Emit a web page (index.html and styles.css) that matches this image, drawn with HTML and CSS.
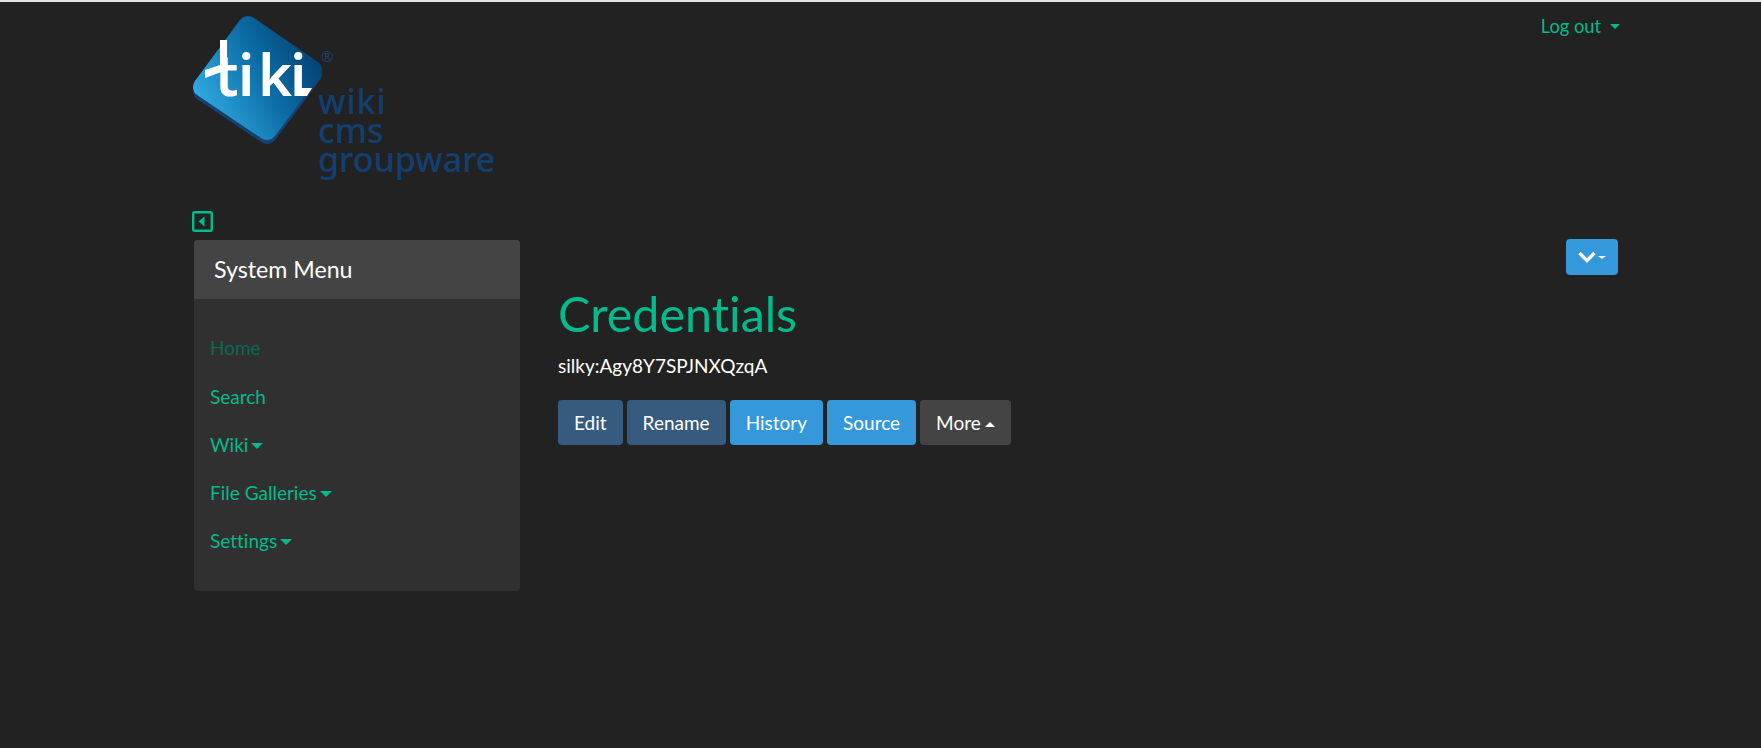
FILE: index.html
```html
<!DOCTYPE html>
<html lang="en">
<head>
    <meta charset="UTF-8">
    <meta name="viewport" content="width=device-width, initial-scale=1.0">
    <title>Credentials</title>
    <link rel="stylesheet" href="styles.css">
</head>
<body>
    <div class="page">
        <header class="top">
            <svg class="logo" width="320" height="170" viewBox="0 0 320 170" role="img" aria-label="Tiki wiki cms groupware">
                <defs>
                    <linearGradient id="tileFill" gradientUnits="userSpaceOnUse" x1="10" y1="95" x2="125" y2="35">
                        <stop offset="0" stop-color="#2fa8e0"/>
                        <stop offset="0.55" stop-color="#0b6aa3"/>
                        <stop offset="1" stop-color="#02406f"/>
                    </linearGradient>
                </defs>
                <path d="M11 77 L56 16 L120 60 L75 120 Z" transform="translate(0 4)" fill="#17406f" stroke="#17406f" stroke-width="20" stroke-linejoin="round"/>
                <path d="M11 77 L56 16 L120 60 L75 120 Z" fill="url(#tileFill)" stroke="url(#tileFill)" stroke-width="20" stroke-linejoin="round"/>
                <path class="logo-cut" d="M28 30 L35 30 L35 60 L13 68 L13 60 L28 55 Z M108 78 L120 78 L115 86 L108 86 Z"/>
                <text class="logo-tiki" x="23 46 66 98" y="86">tiki</text>
                <text class="logo-reg" x="129" y="52">®</text>
                <text class="logo-word logo-word-wide" x="126" y="104">wiki</text>
                <text class="logo-word" x="126" y="133">cms</text>
                <text class="logo-word" x="126" y="162">groupware</text>
            </svg>
            <a class="logout" href="#">Log out<span class="caret caret-wide"></span></a>
        </header>

        <a class="side-toggle" href="#" aria-label="Collapse side column">
            <svg width="21" height="21" viewBox="0 0 21 21"><rect x="1.2" y="1.2" width="18.6" height="18.6" rx="1.5" fill="none" stroke="#00bc8c" stroke-width="2.4"/><path d="M6.5 10.5 L12.5 5.5 V15.5 Z" fill="#00bc8c"/></svg>
        </a>

        <div class="columns">
            <aside class="side-box">
                <h3 class="side-title">System Menu</h3>
                <ul class="side-menu">
                    <li class="muted"><a href="#">Home</a></li>
                    <li><a href="#">Search</a></li>
                    <li><a href="#">Wiki<span class="caret"></span></a></li>
                    <li><a href="#">File Galleries<span class="caret"></span></a></li>
                    <li><a href="#">Settings<span class="caret"></span></a></li>
                </ul>
            </aside>

            <main class="content">
                <div class="page-tools">
                    <button class="btn btn-info btn-tools" aria-label="Page actions">
                        <svg width="18" height="12" viewBox="0 0 18 12"><path d="M1.5 2 L9 9.5 L16.5 2" fill="none" stroke="#fff" stroke-width="3.4"/></svg>
                        <span class="caret caret-small"></span>
                    </button>
                </div>
                <h1>Credentials</h1>
                <p class="body-text">silky:Agy8Y7SPJNXQzqA</p>
                <div class="actions">
                    <button class="btn btn-primary">Edit</button>
                    <button class="btn btn-primary">Rename</button>
                    <button class="btn btn-info">History</button>
                    <button class="btn btn-info">Source</button>
                    <button class="btn btn-dark">More<span class="caret caret-up"></span></button>
                </div>
            </main>
        </div>
    </div>
</body>
</html>
```

FILE: styles.css
```css
html {
    background: #222;
}
body {
    font-family: Lato, 'Liberation Sans', Arial, sans-serif;
    font-size: 19px;
    font-variant-ligatures: none;
    line-height: 1.5;
    color: #fff;
    background: #222;
    margin: 0;
    border-top: 2px solid #e4e4e4;
    height: 746px;
    overflow: hidden;
}
a {
    color: #00bc8c;
    text-decoration: none;
}
.page {
    width: 1426px;
    margin-left: 192px;
}
.top {
    display: flex;
    justify-content: space-between;
    align-items: flex-start;
    height: 209px;
}
.logo {
    display: block;
    margin-top: 8px;
}
.logo-cut {
    fill: #fff;
}
.logo-tiki {
    font-family: 'Noto Sans', sans-serif;
    font-size: 58px;
    font-weight: 600;
    fill: #fff;
}
.logo-reg {
    font-family: 'Noto Sans', sans-serif;
    font-size: 15px;
    fill: #17406f;
}
.logo-word {
    font-family: 'Noto Sans', sans-serif;
    font-size: 34px;
    font-weight: 500;
    fill: #133f70;
}
.logo-word-wide {
    letter-spacing: 1px;
}
.logout {
    font-size: 18.3px;
    margin: 11px -2px 0 0;
}
.caret {
    display: inline-block;
    width: 0;
    height: 0;
    margin-left: 3px;
    vertical-align: 3px;
    border-top: 6px solid currentColor;
    border-left: 6px solid transparent;
    border-right: 6px solid transparent;
}
.caret-wide {
    margin-left: 9px;
    vertical-align: 4px;
    border-top-width: 5px;
    border-left-width: 5px;
    border-right-width: 5px;
}
.caret-small {
    margin-left: 2px;
    vertical-align: 2px;
    border-top-width: 3px;
    border-left-width: 4px;
    border-right-width: 4px;
}
.caret-up {
    margin-left: 4px;
    border-top: 0;
    border-bottom: 5px solid currentColor;
    border-left-width: 5px;
    border-right-width: 5px;
}
.side-toggle {
    display: block;
    width: 21px;
    height: 21px;
}
.side-toggle svg {
    display: block;
}
.columns {
    display: flex;
    align-items: flex-start;
    margin-top: 7px;
}
.side-box {
    width: 326px;
    height: 351px;
    margin: 1px 0 0 2px;
    background: #303030;
    border-radius: 4px;
    overflow: hidden;
    flex-shrink: 0;
}
.side-title {
    margin: 0;
    height: 59px;
    padding: 13px 20px 0;
    box-sizing: border-box;
    background: #444;
    font-size: 23.2px;
    font-weight: 400;
    line-height: 32px;
}
.side-menu {
    list-style: none;
    margin: 0;
    padding: 26px 16px;
}
.side-menu li {
    height: 48px;
    line-height: 48px;
}
.side-menu .muted {
    margin-top: -1px;
    margin-bottom: 1px;
}
.side-menu .muted a {
    color: #0a6b52;
}
.content {
    flex: 1;
    padding-left: 38px;
}
.page-tools {
    display: flex;
    justify-content: flex-end;
}
h1 {
    margin: 9px 0 0;
    font-size: 48.4px;
    font-weight: 400;
    line-height: 58px;
    color: #00bc8c;
}
.body-text {
    margin: 10px 0 0;
    line-height: 27px;
}
.actions {
    display: flex;
    gap: 4px;
    margin-top: 21px;
}
.btn {
    font-family: inherit;
    font-size: 19px;
    font-variant-ligatures: none;
    line-height: 27px;
    height: 45px;
    padding: 0 16px;
    color: #fff;
    border: 0;
    border-radius: 4px;
}
.btn-primary {
    background: #375a7f;
}
.btn-info {
    background: #3498db;
}
.btn-dark {
    background: #444;
}
.btn-tools {
    display: flex;
    align-items: center;
    justify-content: center;
    width: 52px;
    height: 36px;
    padding: 0;
}
```
